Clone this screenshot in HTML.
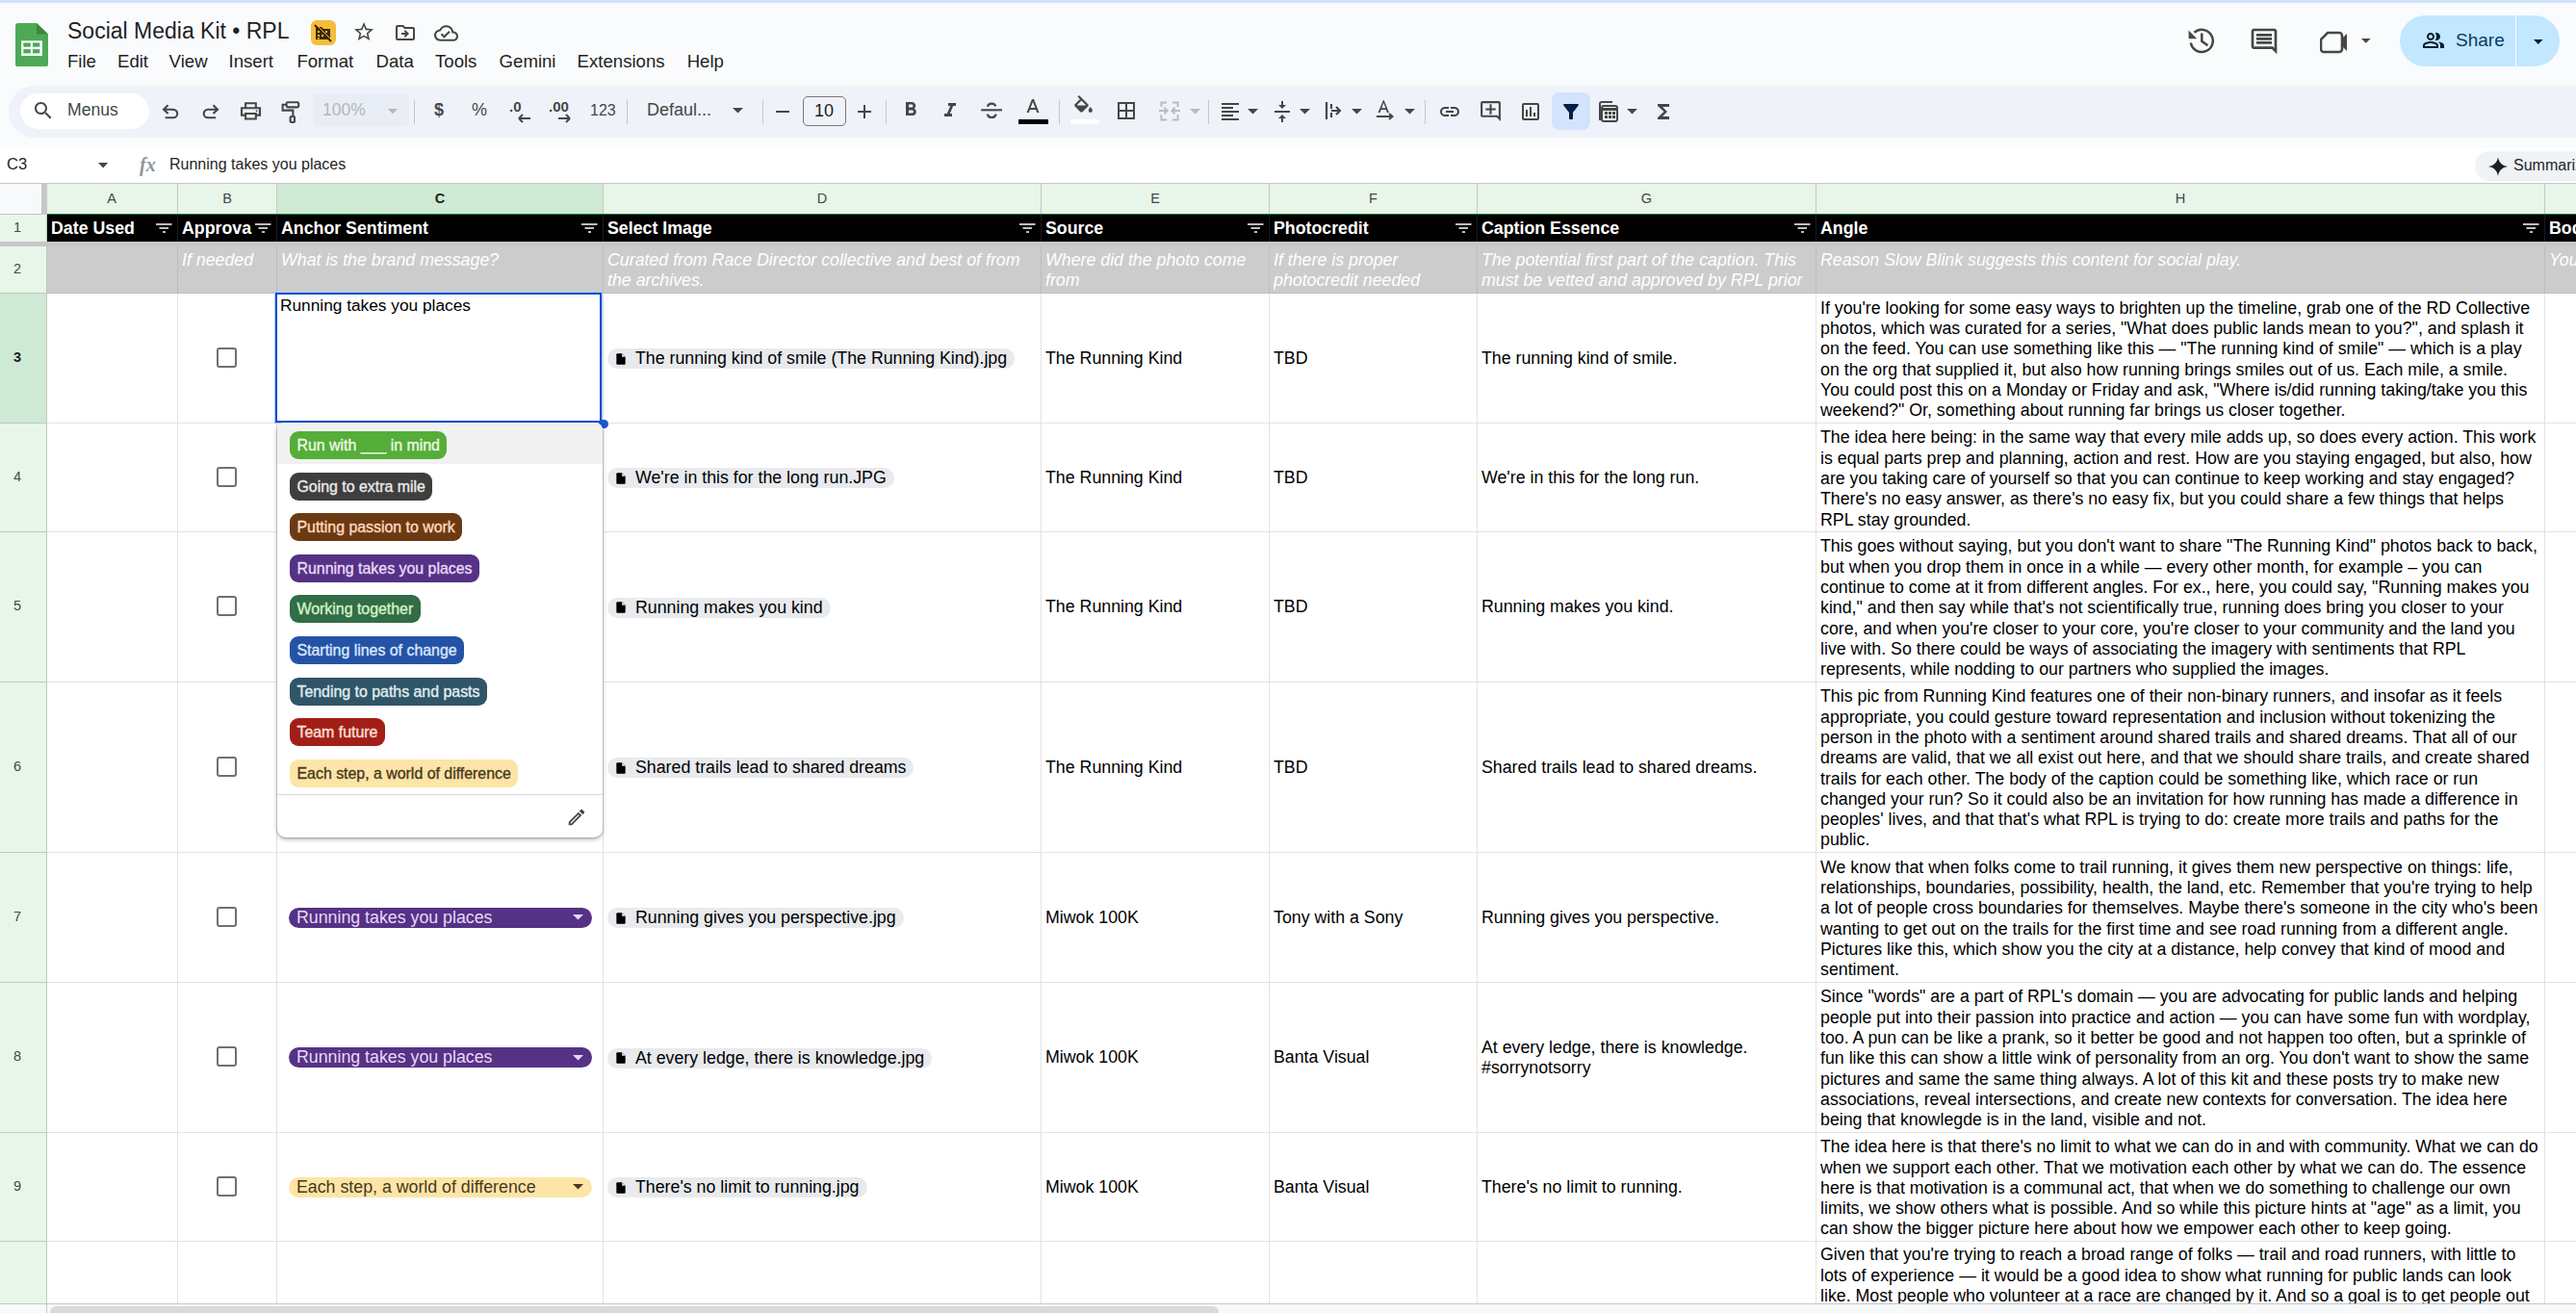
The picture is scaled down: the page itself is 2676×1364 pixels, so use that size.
<!DOCTYPE html><html><head><meta charset="utf-8"><style>
html,body{margin:0;padding:0;}
body{width:2676px;height:1364px;overflow:hidden;position:relative;background:#f9fbfd;font-family:"Liberation Sans", sans-serif;color:#1f1f1f;}
div{box-sizing:border-box;}
svg{display:block}
</style></head><body>
<div style="position:absolute;left:0px;top:0px;width:2676px;height:3px;background:#d3e3fd"></div>
<svg style="position:absolute;left:16px;top:23.6px" width="34" height="45.5" viewBox="0 0 34 45.5">
<path d="M3 0H22L34 11.6V42.5a3 3 0 0 1-3 3H3a3 3 0 0 1-3-3V3a3 3 0 0 1 3-3z" fill="#4caa57"/>
<path d="M22 0L34 11.6H22z" fill="#3a873c"/>
<rect x="6.2" y="18.3" width="21.7" height="15.7" fill="#fff"/>
<rect x="8.3" y="20.4" width="7.5" height="4.3" rx="0.8" fill="#4caa57"/><rect x="18" y="20.4" width="7.3" height="4.3" fill="#4caa57"/>
<rect x="8.3" y="27.1" width="7.5" height="4.3" fill="#4caa57"/><rect x="18" y="27.1" width="7.3" height="4.3" fill="#4caa57"/>
</svg>
<div style="position:absolute;left:70px;top:20.18px;font-size:23px;line-height:25.69px;height:25.69px;white-space:pre;color:#1f1f1f;font-weight:normal;font-style:normal;">Social Media Kit • RPL</div>
<div style="position:absolute;left:323px;top:21px;width:26px;height:26px;background:#f5bd3a;border-radius:6px"></div>
<svg style="position:absolute;left:326px;top:24px" width="20" height="20" viewBox="0 0 20 20">
<path d="M2 4h6l2 2h7v11H2z" fill="#3c2a00"/>
<g fill="#f5bd3a"><rect x="4" y="8" width="2" height="2"/><rect x="8" y="8" width="2" height="2"/><rect x="12" y="8" width="2" height="2"/>
<rect x="4" y="12" width="2" height="2"/><rect x="8" y="12" width="2" height="2"/><rect x="4" y="15" width="2" height="1.5"/></g>
<path d="M1 2L18 19" stroke="#3c2a00" stroke-width="2.2"/><path d="M2.2 1.2L19 18" stroke="#f5bd3a" stroke-width="1"/>
</svg>
<svg style="position:absolute;left:366px;top:21px" width="24" height="24" viewBox="0 0 24 24"><path fill="#444746" d="M22 9.24l-7.19-.62L12 2 9.19 8.63 2 9.24l5.46 4.73L5.82 21 12 17.27 18.18 21l-1.63-7.03L22 9.24zM12 15.4l-3.76 2.270 1-4.28-3.32-2.88 4.38-.38L12 6.1l1.71 4.04 4.38.38-3.32 2.88 1 4.28L12 15.4z"/></svg>
<svg style="position:absolute;left:409px;top:22px" width="24" height="24" viewBox="0 0 24 24"><path fill="#444746" d="M20 6h-8l-2-2H4c-1.1 0-1.99.9-1.99 2L2 18c0 1.1.9 2 2 2h16c1.1 0 2-.9 2-2V8c0-1.1-.9-2-2-2zm0 12H4V6h5.17l2 2H20v10zm-7.84-6H8v2h4.16l-1.59 1.59L11.99 17 16 13.01 11.990 9l-1.41 1.41L12.16 12z"/></svg>
<svg style="position:absolute;left:451px;top:22px" width="25" height="25" viewBox="0 0 24 24"><path fill="#444746" d="M19.35 10.04C18.67 6.59 15.64 4 12 4 9.11 4 6.6 5.64 5.35 8.04 2.34 8.36 0 10.91 0 14c0 3.31 2.69 6 6 6h13c2.76 0 5-2.24 5-5 0-2.64-2.05-4.78-4.65-4.96zM19 18H6c-2.21 0-4-1.79-4-4 0-2.05 1.53-3.76 3.56-3.97l1.07-.11.5-.95C8.08 7.14 9.94 6 12 6c2.62 0 4.88 1.86 5.39 4.43l.3 1.5 1.53.11c1.56.1 2.78 1.41 2.78 2.96 0 1.65-1.35 3-3 3zm-9-3.82l-2.09-2.09L6.5 13.5 10 17l6.01-6.01-1.41-1.41z"/></svg>
<div style="position:absolute;left:70px;top:53.97px;font-size:18.6px;line-height:20.78px;height:20.78px;white-space:pre;color:#1f1f1f;font-weight:normal;font-style:normal;">File</div>
<div style="position:absolute;left:122px;top:53.97px;font-size:18.6px;line-height:20.78px;height:20.78px;white-space:pre;color:#1f1f1f;font-weight:normal;font-style:normal;">Edit</div>
<div style="position:absolute;left:175.6px;top:53.97px;font-size:18.6px;line-height:20.78px;height:20.78px;white-space:pre;color:#1f1f1f;font-weight:normal;font-style:normal;">View</div>
<div style="position:absolute;left:237.5px;top:53.97px;font-size:18.6px;line-height:20.78px;height:20.78px;white-space:pre;color:#1f1f1f;font-weight:normal;font-style:normal;">Insert</div>
<div style="position:absolute;left:308.4px;top:53.97px;font-size:18.6px;line-height:20.78px;height:20.78px;white-space:pre;color:#1f1f1f;font-weight:normal;font-style:normal;">Format</div>
<div style="position:absolute;left:390.5px;top:53.97px;font-size:18.6px;line-height:20.78px;height:20.78px;white-space:pre;color:#1f1f1f;font-weight:normal;font-style:normal;">Data</div>
<div style="position:absolute;left:452px;top:53.97px;font-size:18.6px;line-height:20.78px;height:20.78px;white-space:pre;color:#1f1f1f;font-weight:normal;font-style:normal;">Tools</div>
<div style="position:absolute;left:518.6px;top:53.97px;font-size:18.6px;line-height:20.78px;height:20.78px;white-space:pre;color:#1f1f1f;font-weight:normal;font-style:normal;">Gemini</div>
<div style="position:absolute;left:599.6px;top:53.97px;font-size:18.6px;line-height:20.78px;height:20.78px;white-space:pre;color:#1f1f1f;font-weight:normal;font-style:normal;">Extensions</div>
<div style="position:absolute;left:713.7px;top:53.97px;font-size:18.6px;line-height:20.78px;height:20.78px;white-space:pre;color:#1f1f1f;font-weight:normal;font-style:normal;">Help</div>
<svg style="position:absolute;left:2260px;top:20px" width="50" height="50" viewBox="2260 20 50 50"><g fill="none" stroke="#444746" stroke-width="2.5">
<path d="M2275.8 44.6A11.6 11.6 0 1 0 2279.4 33.8"/><path d="M2287.3 34.6V42.8L2293.4 47.3"/></g>
<path d="M2273.6 31.6V40.2H2282.2Z" fill="#444746"/></svg>
<svg style="position:absolute;left:2336px;top:27px" width="32" height="32" viewBox="0 0 24 24"><path fill="#444746" d="M21.99 4c0-1.1-.89-2-1.99-2H4c-1.1 0-2 .9-2 2v12c0 1.1.9 2 2 2h14l4 4-.01-18zM20 4v13.17L18.83 16H4V4h16zM6 12h12v2H6zm0-3h12v2H6zm0-3h12v2H6z"/></svg>
<svg style="position:absolute;left:2410px;top:32px" width="30" height="24" viewBox="0 0 30 24">
<path d="M8 2H20a3 3 0 0 1 3 3V19a3 3 0 0 1-3 3H4a3 3 0 0 1-3-3V9z" fill="none" stroke="#444746" stroke-width="2.6"/>
<path d="M23 8L28 3V21L23 16z" fill="#444746"/></svg>
<svg style="position:absolute;left:2452.20px;top:39.00px" width="11.60" height="6.80" viewBox="-1 -1 11.60 6.80"><path d="M0 0H9.6L4.8 4.8Z" fill="#444746"/></svg>
<div style="position:absolute;left:2493px;top:16px;width:166px;height:53px;background:#c2e7ff;border-radius:27px"></div>
<div style="position:absolute;left:2613px;top:16px;width:1.3px;height:53px;background:#f9fbfd"></div>
<svg style="position:absolute;left:2515px;top:30px" width="26" height="24" viewBox="0 0 24 24"><path fill="#001d35" d="M16.67 13.13C18.04 14.06 19 15.32 19 17v3h4v-3c0-2.18-3.57-3.47-6.33-3.87zM15 12c2.21 0 4-1.79 4-4s-1.79-4-4-4c-.47 0-.91.1-1.33.24C14.5 5.27 15 6.58 15 8s-.5 2.73-1.33 3.76c.42.14.86.24 1.33.24zm-6 0c2.21 0 4-1.79 4-4s-1.79-4-4-4-4 1.79-4 4 1.79 4 4 4zm0-6c1.1 0 2 .9 2 2s-.9 2-2 2-2-.9-2-2 .9-2 2-2zm0 7c-2.67 0-8 1.34-8 4v3h16v-3c0-2.66-5.33-4-8-4zm6 5H3v-.99C3.2 16.29 6.3 15 9 15s5.8 1.29 6 2v1z"/></svg>
<div style="position:absolute;left:2551px;top:31.30px;font-size:19px;line-height:21.22px;height:21.22px;white-space:pre;color:#0b3a64;font-weight:normal;font-style:normal;font-weight:500">Share</div>
<svg style="position:absolute;left:2631.00px;top:39.80px" width="11.60" height="7.00" viewBox="-1 -1 11.60 7.00"><path d="M0 0H9.6L4.8 5Z" fill="#001d35"/></svg>
<div style="position:absolute;left:9px;top:89px;width:2800px;height:54px;background:#eff3f9;border-radius:27px"></div>
<div style="position:absolute;left:21px;top:97px;width:134px;height:37px;background:#fff;border-radius:19px"></div>
<svg style="position:absolute;left:33px;top:103px" width="24" height="24" viewBox="0 0 24 24"><path fill="#444746" d="M15.5 14h-.79l-.28-.27C15.41 12.59 16 11.11 16 9.5 16 5.91 13.09 3 9.5 3S3 5.91 3 9.5 5.91 16 9.5 16c1.61 0 3.090-.59 4.23-1.57l.27.28v.79l5 4.99L20.49 19l-4.99-5zm-6 0C7.01 14 5 11.99 5 9.5S7.01 5 9.5 5 14 7.01 14 9.5 11.99 14 9.5 14z"/></svg>
<div style="position:absolute;left:70px;top:104.67px;font-size:17.6px;line-height:19.66px;height:19.66px;white-space:pre;color:#444746;font-weight:normal;font-style:normal;">Menus</div>
<svg style="position:absolute;left:0;top:0" width="340" height="140" viewBox="0 0 340 140"><g fill="none" stroke="#444746" stroke-width="2.1" stroke-linejoin="miter">
<path d="M174.6 109.3L170 113.7L174.6 118.1M170 113.7H179.9A4.3 4.3 0 0 1 179.9 122.3H171.6"/>
<path d="M221.5 109.3L226.1 113.7L221.5 118.1M226.1 113.7H216A4.3 4.3 0 0 0 216 122.3H224.2"/>
<path d="M255.1 111.8V107.2H265.8V111.8M255.1 119.6H251V112.2H270V119.6H265.8M255.1 118H265.8V123.5H255.1Z"/>
<rect x="297.6" y="106.2" width="12.6" height="5.2" rx="1.3"/>
<path d="M297.6 108.8H293.6V114.6H304.4V121"/><rect x="301.6" y="121" width="4.4" height="6" rx="1"/>
</g><circle cx="266.6" cy="115.2" r="0.9" fill="#444746"/></svg>
<div style="position:absolute;left:325px;top:97px;width:100px;height:35px;background:#e9eef6;border-radius:4px"></div>
<div style="position:absolute;left:335px;top:104.66px;font-size:17.5px;line-height:19.55px;height:19.55px;white-space:pre;color:#b4b7ba;font-weight:normal;font-style:normal;">100%</div>
<svg style="position:absolute;left:401.50px;top:111.80px" width="12.00" height="7.20" viewBox="-1 -1 12.00 7.20"><path d="M0 0H10L5.0 5.2Z" fill="#b4b7ba"/></svg>
<div style="position:absolute;left:430px;top:104px;width:1px;height:25px;background:#c7c7c7"></div>
<div style="position:absolute;left:451px;top:104.21px;font-size:18px;line-height:20.11px;height:20.11px;white-space:pre;color:#444746;font-weight:normal;font-style:normal;font-weight:600">$</div>
<div style="position:absolute;left:490px;top:104.21px;font-size:18px;line-height:20.11px;height:20.11px;white-space:pre;color:#444746;font-weight:normal;font-style:normal;">%</div>
<div style="position:absolute;left:529px;top:103.42px;font-size:15px;line-height:16.75px;height:16.75px;white-space:pre;color:#444746;font-weight:bold;font-style:normal;">.0</div>
<svg style="position:absolute;left:538px;top:118px" width="14" height="10" viewBox="0 0 14 10"><path d="M1 5H13M1 5L5 1M1 5L5 9" stroke="#444746" stroke-width="2" fill="none"/></svg>
<div style="position:absolute;left:570px;top:103.42px;font-size:15px;line-height:16.75px;height:16.75px;white-space:pre;color:#444746;font-weight:bold;font-style:normal;">.00</div>
<svg style="position:absolute;left:579px;top:118px" width="14" height="10" viewBox="0 0 14 10"><path d="M1 5H13M13 5L9 1M13 5L9 9" stroke="#444746" stroke-width="2" fill="none"/></svg>
<div style="position:absolute;left:613px;top:105.52px;font-size:16px;line-height:17.87px;height:17.87px;white-space:pre;color:#444746;font-weight:normal;font-style:normal;">123</div>
<div style="position:absolute;left:651px;top:104px;width:1px;height:25px;background:#c7c7c7"></div>
<div style="position:absolute;left:672px;top:104.21px;font-size:18px;line-height:20.11px;height:20.11px;white-space:pre;color:#444746;font-weight:normal;font-style:normal;">Defaul...</div>
<svg style="position:absolute;left:759.50px;top:110.70px" width="13.00" height="7.60" viewBox="-1 -1 13.00 7.60"><path d="M0 0H11L5.5 5.6Z" fill="#444746"/></svg>
<div style="position:absolute;left:792px;top:104px;width:1px;height:25px;background:#c7c7c7"></div>
<div style="position:absolute;left:806px;top:115px;width:14px;height:2px;background:#444746"></div>
<div style="position:absolute;left:834px;top:100px;width:45px;height:31px;border:1.3px solid #747775;border-radius:5px"></div>
<div style="position:absolute;left:846px;top:104.71px;font-size:18px;line-height:20.11px;height:20.11px;white-space:pre;color:#1f1f1f;font-weight:normal;font-style:normal;">10</div>
<div style="position:absolute;left:891px;top:115px;width:14px;height:2px;background:#444746"></div>
<div style="position:absolute;left:897px;top:109px;width:2px;height:14px;background:#444746"></div>
<div style="position:absolute;left:920px;top:104px;width:1px;height:25px;background:#c7c7c7"></div>
<svg style="position:absolute;left:934px;top:102px" width="24" height="24" viewBox="0 0 24 24"><path fill="#444746" d="M15.6 10.79c.97-.67 1.65-1.77 1.65-2.79 0-2.26-1.75-4-4-4H7v14h7.04c2.09 0 3.71-1.7 3.71-3.79 0-1.52-.86-2.82-2.15-3.42zM10 6.5h3c.83 0 1.5.67 1.5 1.5s-.67 1.5-1.5 1.5h-3v-3zm3.5 9H10v-3h3.5c.83 0 1.5.67 1.5 1.5s-.67 1.5-1.5 1.5z"/></svg>
<svg style="position:absolute;left:975px;top:103px" width="24" height="24" viewBox="0 0 24 24"><path fill="#444746" d="M10 4v3h2.21l-3.42 8H6v3h8v-3h-2.21l3.42-8H18V4z"/></svg>
<svg style="position:absolute;left:1010px;top:95px" width="40" height="40" viewBox="1010 95 40 40"><g fill="none" stroke="#444746" stroke-width="2.1">
<path d="M1019.2 114.3H1041"/><path d="M1025.8 110.8A4.6 4.6 0 0 1 1034.4 110.4"/><path d="M1025.6 118.6A4.8 4.8 0 0 0 1034.8 118.6"/></g></svg>
<svg style="position:absolute;left:1061px;top:100px" width="24" height="24" viewBox="0 0 24 24"><path fill="#444746" d="M11 3L5.5 17h2.25l1.12-3h6.25l1.12 3h2.25L13 3h-2zm-1.38 9L12 5.67 14.38 12H9.62z"/></svg>
<div style="position:absolute;left:1058px;top:124px;width:31px;height:5px;background:#000"></div>
<div style="position:absolute;left:1100px;top:104px;width:1px;height:25px;background:#c7c7c7"></div>
<svg style="position:absolute;left:1113px;top:99px" width="25" height="25" viewBox="0 0 24 24"><path fill="#444746" d="M16.56 8.94L7.62 0 6.21 1.41l2.38 2.38-5.15 5.15c-.59.59-.59 1.54 0 2.12l5.5 5.5c.29.29.68.44 1.06.44s.77-.15 1.06-.44l5.5-5.5c.59-.58.59-1.53 0-2.12zM5.21 10L10 5.21 14.79 10H5.21zM19 11.5s-2 2.17-2 3.5c0 1.1.9 2 2 2s2-.9 2-2c0-1.33-2-3.5-2-3.5z"/></svg>
<div style="position:absolute;left:1112px;top:124px;width:30px;height:5px;background:#fff"></div>
<svg style="position:absolute;left:1158px;top:103px" width="24" height="24" viewBox="0 0 24 24"><path fill="#444746" d="M3 3v18h18V3H3zm8 16H5v-6h6v6zm0-8H5V5h6v6zm8 8h-6v-6h6v6zm0-8h-6V5h6v6z"/></svg>
<svg style="position:absolute;left:1195px;top:100px" width="40" height="30" viewBox="1195 100 40 30"><g stroke="#b8bcc0" stroke-width="2" fill="none">
<path d="M1212.1 106.5H1206.4V111M1206.4 119.3V124.5H1212.1M1217.9 106.5H1223.6V111M1223.6 119.3V124.5H1217.9"/><path d="M1204 115H1212.6M1209.4 111.8L1212.6 115L1209.4 118.2M1226 115H1217.4M1220.6 111.8L1217.4 115L1220.6 118.2"/></g></svg>
<svg style="position:absolute;left:1235.20px;top:112.10px" width="13.00" height="7.60" viewBox="-1 -1 13.00 7.60"><path d="M0 0H11L5.5 5.6Z" fill="#b8bcc0"/></svg>
<div style="position:absolute;left:1255px;top:104px;width:1px;height:25px;background:#c7c7c7"></div>
<svg style="position:absolute;left:1266px;top:104px" width="24" height="24" viewBox="0 0 24 24"><path fill="#444746" d="M15 15H3v2h12v-2zm0-8H3v2h12V7zM3 13h18v-2H3v2zm0 8h18v-2H3v2zM3 3v2h18V3H3z"/></svg>
<svg style="position:absolute;left:1295.30px;top:112.10px" width="13.00" height="7.60" viewBox="-1 -1 13.00 7.60"><path d="M0 0H11L5.5 5.6Z" fill="#444746"/></svg>
<svg style="position:absolute;left:1320px;top:104px" width="24" height="24" viewBox="0 0 24 24"><path fill="#444746" d="M8 19h3v4h2v-4h3l-4-4-4 4zm8-14h-3V1h-2v4H8l4 4 4-4zM4 11v2h16v-2H4z"/></svg>
<svg style="position:absolute;left:1349.00px;top:112.10px" width="13.00" height="7.60" viewBox="-1 -1 13.00 7.60"><path d="M0 0H11L5.5 5.6Z" fill="#444746"/></svg>
<svg style="position:absolute;left:1376px;top:104px" width="20" height="22" viewBox="0 0 20 22"><g stroke="#444746" stroke-width="2.2" fill="none">
<path d="M2 2V20M7 4V9M7 13V18M7 11H16M12 7L16 11L12 15"/></g></svg>
<svg style="position:absolute;left:1403.00px;top:112.10px" width="13.00" height="7.60" viewBox="-1 -1 13.00 7.60"><path d="M0 0H11L5.5 5.6Z" fill="#444746"/></svg>
<svg style="position:absolute;left:1429px;top:103px" width="22" height="24" viewBox="0 0 22 24"><path d="M8 1L2.5 14h2.1l1.1-3h5.1l1.1 3h2.1L8.6 1zM6.3 9.2L8.3 3.8l2 5.4z" fill="#444746"/>
<path d="M1 18H17M14 15L17.5 18L14 21" stroke="#444746" stroke-width="2" fill="none"/></svg>
<svg style="position:absolute;left:1457.70px;top:112.10px" width="13.00" height="7.60" viewBox="-1 -1 13.00 7.60"><path d="M0 0H11L5.5 5.6Z" fill="#444746"/></svg>
<div style="position:absolute;left:1480px;top:104px;width:1px;height:25px;background:#c7c7c7"></div>
<svg style="position:absolute;left:1494px;top:104px" width="24" height="24" viewBox="0 0 24 24"><path fill="#444746" d="M3.9 12c0-1.71 1.39-3.1 3.1-3.1h4V7H7c-2.76 0-5 2.24-5 5s2.24 5 5 5h4v-1.9H7c-1.71 0-3.1-1.39-3.1-3.1zM8 13h8v-2H8v2zm9-6h-4v1.9h4c1.71 0 3.1 1.39 3.1 3.1s-1.39 3.1-3.1 3.1h-4V17h4c2.76 0 5-2.24 5-5s-2.24-5-5-5z"/></svg>
<svg style="position:absolute;left:1536px;top:103px" width="25" height="25" viewBox="0 0 24 24"><path fill="#444746" d="M22 4c0-1.1-.9-2-2-2H4c-1.1 0-2 .9-2 2v12c0 1.1.9 2 2 2h14l4 4V4zm-2 13.17L18.83 16H4V4h16v13.17zM13 5h-2v4H7v2h4v4h2v-4h4V9h-4z"/></svg>
<svg style="position:absolute;left:1578px;top:104px" width="24" height="24" viewBox="0 0 24 24"><path fill="#444746" d="M9 17H7v-7h2v7zm4 0h-2V7h2v10zm4 0h-2v-4h2v4zm2 2H5V5h14v14zm0-16H5c-1.1 0-2 .9-2 2v14c0 1.1.9 2 2 2h14c1.1 0 2-.9 2-2V5c0-1.1-.9-2-2-2z"/></svg>
<div style="position:absolute;left:1612px;top:96px;width:40px;height:38.5px;background:#d3e3fd;border-radius:8px"></div>
<svg style="position:absolute;left:1620px;top:104px" width="24" height="24" viewBox="0 0 24 24"><path fill="#041e49" d="M4.25 5.61C6.27 8.2 10 13 10 13v6c0 .55.45 1 1 1h2c.55 0 1-.45 1-1v-6s3.72-4.8 5.74-7.39c.51-.66.04-1.61-.79-1.61H5.04c-.83 0-1.3.95-.79 1.61z"/></svg>
<svg style="position:absolute;left:1658px;top:104px" width="25" height="24" viewBox="0 0 25 24"><g fill="none" stroke="#444746" stroke-width="2">
<path d="M4 21V4a2 2 0 0 1 2-2H17"/><rect x="6" y="6" width="16" height="16" rx="2"/></g>
<g fill="#444746"><rect x="9" y="12" width="3" height="3"/><rect x="13" y="12" width="3" height="3"/><rect x="17" y="12" width="3" height="3"/>
<rect x="9" y="16" width="3" height="3"/><rect x="13" y="16" width="3" height="3"/><rect x="17" y="16" width="3" height="3"/><rect x="7" y="8" width="14" height="3"/></g></svg>
<svg style="position:absolute;left:1688.70px;top:112.10px" width="13.00" height="7.60" viewBox="-1 -1 13.00 7.60"><path d="M0 0H11L5.5 5.6Z" fill="#444746"/></svg>
<svg style="position:absolute;left:1716px;top:104px" width="24" height="24" viewBox="0 0 24 24"><path fill="#444746" d="M18 4H6v2l6.5 6L6 18v2h12v-3h-7l5-5-5-5h7z"/></svg>
<div style="position:absolute;left:0px;top:153px;width:2676px;height:38px;background:#fff"></div>
<div style="position:absolute;left:7px;top:162.18px;font-size:16.6px;line-height:18.54px;height:18.54px;white-space:pre;color:#1f1f1f;font-weight:normal;font-style:normal;">C3</div>
<svg style="position:absolute;left:101.40px;top:168.30px" width="12.20" height="7.60" viewBox="-1 -1 12.20 7.60"><path d="M0 0H10.2L5.1 5.6Z" fill="#444746"/></svg>
<div style="position:absolute;left:145px;top:159.90px;font-size:20px;line-height:22.34px;height:22.34px;white-space:pre;color:#8f959b;font-weight:normal;font-style:normal;font-family:'Liberation Serif',serif;font-style:italic;font-weight:bold">fx</div>
<div style="position:absolute;left:176px;top:161.82px;font-size:16px;line-height:17.87px;height:17.87px;white-space:pre;color:#1f1f1f;font-weight:normal;font-style:normal;">Running takes you places</div>
<div style="position:absolute;left:2571px;top:157px;width:120px;height:31px;background:#eff2f7;border-radius:16px"></div>
<svg style="position:absolute;left:2585px;top:163px" width="20" height="20" viewBox="0 0 20 20"><path d="M10 0C10.6 5.5 14.5 9.4 20 10 14.5 10.6 10.6 14.5 10 20 9.4 14.5 5.5 10.6 0 10 5.5 9.4 9.4 5.5 10 0z" fill="#1f1f1f"/></svg>
<div style="position:absolute;left:2611px;top:163.22px;font-size:16px;line-height:17.87px;height:17.87px;white-space:pre;color:#1f1f1f;font-weight:normal;font-style:normal;">Summarize</div>
<div style="position:absolute;left:0px;top:190px;width:2676px;height:1px;background:#c7c7c7"></div>
<div style="position:absolute;left:0px;top:191px;width:43px;height:31px;background:#f8f9fa"></div>
<div style="position:absolute;left:43px;top:191px;width:5px;height:31px;background:#c7c7c7"></div>
<div style="position:absolute;left:48px;top:191px;width:136px;height:31px;background:#e8f5e9"></div>
<div style="position:absolute;left:48px;top:191px;width:136px;height:31px;line-height:31px;text-align:center;font-size:14.5px;color:#444746;font-weight:normal">A</div>
<div style="position:absolute;left:185px;top:191px;width:102px;height:31px;background:#e8f5e9"></div>
<div style="position:absolute;left:184px;top:191px;width:1px;height:31px;background:#c4c7c5"></div>
<div style="position:absolute;left:185px;top:191px;width:102px;height:31px;line-height:31px;text-align:center;font-size:14.5px;color:#444746;font-weight:normal">B</div>
<div style="position:absolute;left:288px;top:191px;width:338px;height:31px;background:#cee9d4"></div>
<div style="position:absolute;left:287px;top:191px;width:1px;height:31px;background:#c4c7c5"></div>
<div style="position:absolute;left:288px;top:191px;width:338px;height:31px;line-height:31px;text-align:center;font-size:14.5px;color:#1f1f1f;font-weight:bold">C</div>
<div style="position:absolute;left:627px;top:191px;width:454px;height:31px;background:#e8f5e9"></div>
<div style="position:absolute;left:626px;top:191px;width:1px;height:31px;background:#c4c7c5"></div>
<div style="position:absolute;left:627px;top:191px;width:454px;height:31px;line-height:31px;text-align:center;font-size:14.5px;color:#444746;font-weight:normal">D</div>
<div style="position:absolute;left:1082px;top:191px;width:236px;height:31px;background:#e8f5e9"></div>
<div style="position:absolute;left:1081px;top:191px;width:1px;height:31px;background:#c4c7c5"></div>
<div style="position:absolute;left:1082px;top:191px;width:236px;height:31px;line-height:31px;text-align:center;font-size:14.5px;color:#444746;font-weight:normal">E</div>
<div style="position:absolute;left:1319px;top:191px;width:215px;height:31px;background:#e8f5e9"></div>
<div style="position:absolute;left:1318px;top:191px;width:1px;height:31px;background:#c4c7c5"></div>
<div style="position:absolute;left:1319px;top:191px;width:215px;height:31px;line-height:31px;text-align:center;font-size:14.5px;color:#444746;font-weight:normal">F</div>
<div style="position:absolute;left:1535px;top:191px;width:351px;height:31px;background:#e8f5e9"></div>
<div style="position:absolute;left:1534px;top:191px;width:1px;height:31px;background:#c4c7c5"></div>
<div style="position:absolute;left:1535px;top:191px;width:351px;height:31px;line-height:31px;text-align:center;font-size:14.5px;color:#444746;font-weight:normal">G</div>
<div style="position:absolute;left:1887px;top:191px;width:756px;height:31px;background:#e8f5e9"></div>
<div style="position:absolute;left:1886px;top:191px;width:1px;height:31px;background:#c4c7c5"></div>
<div style="position:absolute;left:1887px;top:191px;width:756px;height:31px;line-height:31px;text-align:center;font-size:14.5px;color:#444746;font-weight:normal">H</div>
<div style="position:absolute;left:2644px;top:191px;width:156px;height:31px;background:#e8f5e9"></div>
<div style="position:absolute;left:2643px;top:191px;width:1px;height:31px;background:#c4c7c5"></div>
<div style="position:absolute;left:2644px;top:191px;width:156px;height:31px;line-height:31px;text-align:center;font-size:14.5px;color:#444746;font-weight:normal">I</div>
<div style="position:absolute;left:48px;top:222px;width:2676px;height:1px;background:#188038"></div>
<div style="position:absolute;left:0px;top:223px;width:48px;height:28px;background:#e8f5e9"></div>
<div style="position:absolute;left:0px;top:251px;width:48px;height:1px;background:#c4c7c5"></div>
<div style="position:absolute;left:0px;top:221.5px;width:36px;height:28px;display:flex;align-items:center;justify-content:center;font-size:14.5px;color:#444746;font-weight:normal">1</div>
<div style="position:absolute;left:0px;top:256px;width:48px;height:48px;background:#e8f5e9"></div>
<div style="position:absolute;left:0px;top:304px;width:48px;height:1px;background:#c4c7c5"></div>
<div style="position:absolute;left:0px;top:254.5px;width:36px;height:48px;display:flex;align-items:center;justify-content:center;font-size:14.5px;color:#444746;font-weight:normal">2</div>
<div style="position:absolute;left:0px;top:305px;width:48px;height:134px;background:#cee9d4"></div>
<div style="position:absolute;left:0px;top:439px;width:48px;height:1px;background:#c4c7c5"></div>
<div style="position:absolute;left:0px;top:303.5px;width:36px;height:134px;display:flex;align-items:center;justify-content:center;font-size:14.5px;color:#1f1f1f;font-weight:bold">3</div>
<div style="position:absolute;left:0px;top:440px;width:48px;height:112px;background:#e8f5e9"></div>
<div style="position:absolute;left:0px;top:552px;width:48px;height:1px;background:#c4c7c5"></div>
<div style="position:absolute;left:0px;top:438.5px;width:36px;height:112px;display:flex;align-items:center;justify-content:center;font-size:14.5px;color:#444746;font-weight:normal">4</div>
<div style="position:absolute;left:0px;top:553px;width:48px;height:155px;background:#e8f5e9"></div>
<div style="position:absolute;left:0px;top:708px;width:48px;height:1px;background:#c4c7c5"></div>
<div style="position:absolute;left:0px;top:551.5px;width:36px;height:155px;display:flex;align-items:center;justify-content:center;font-size:14.5px;color:#444746;font-weight:normal">5</div>
<div style="position:absolute;left:0px;top:709px;width:48px;height:176px;background:#e8f5e9"></div>
<div style="position:absolute;left:0px;top:885px;width:48px;height:1px;background:#c4c7c5"></div>
<div style="position:absolute;left:0px;top:707.5px;width:36px;height:176px;display:flex;align-items:center;justify-content:center;font-size:14.5px;color:#444746;font-weight:normal">6</div>
<div style="position:absolute;left:0px;top:886px;width:48px;height:134px;background:#e8f5e9"></div>
<div style="position:absolute;left:0px;top:1020px;width:48px;height:1px;background:#c4c7c5"></div>
<div style="position:absolute;left:0px;top:884.5px;width:36px;height:134px;display:flex;align-items:center;justify-content:center;font-size:14.5px;color:#444746;font-weight:normal">7</div>
<div style="position:absolute;left:0px;top:1021px;width:48px;height:155px;background:#e8f5e9"></div>
<div style="position:absolute;left:0px;top:1176px;width:48px;height:1px;background:#c4c7c5"></div>
<div style="position:absolute;left:0px;top:1019.5px;width:36px;height:155px;display:flex;align-items:center;justify-content:center;font-size:14.5px;color:#444746;font-weight:normal">8</div>
<div style="position:absolute;left:0px;top:1177px;width:48px;height:112px;background:#e8f5e9"></div>
<div style="position:absolute;left:0px;top:1289px;width:48px;height:1px;background:#c4c7c5"></div>
<div style="position:absolute;left:0px;top:1175.5px;width:36px;height:112px;display:flex;align-items:center;justify-content:center;font-size:14.5px;color:#444746;font-weight:normal">9</div>
<div style="position:absolute;left:0px;top:1290px;width:48px;height:64px;background:#e8f5e9"></div>
<div style="position:absolute;left:0px;top:1354px;width:48px;height:1px;background:#c4c7c5"></div>
<div style="position:absolute;left:48px;top:191px;width:1px;height:1163px;background:#c4c7c5"></div>
<div style="position:absolute;left:0px;top:222px;width:48px;height:1px;background:#c4c7c5"></div>
<div style="position:absolute;left:49px;top:223px;width:2676px;height:28px;background:#000"></div>
<div style="position:absolute;left:53px;top:223px;width:106px;height:28px;line-height:28px;font-size:17.77px;font-weight:bold;color:#fff;white-space:pre;overflow:hidden">Date Used</div>
<svg style="position:absolute;left:162px;top:231px" width="17" height="12" viewBox="0 0 17 12"><g fill="#bdbdbd"><rect x="0" y="1" width="16.5" height="2"/><rect x="3.5" y="5" width="9.5" height="2"/><rect x="7" y="9" width="3" height="2"/></g></svg>
<div style="position:absolute;left:184px;top:223px;width:1px;height:28px;background:#1b1b1b"></div>
<div style="position:absolute;left:189px;top:223px;width:73px;height:28px;line-height:28px;font-size:17.77px;font-weight:bold;color:#fff;white-space:pre;overflow:hidden">Approva</div>
<svg style="position:absolute;left:265px;top:231px" width="17" height="12" viewBox="0 0 17 12"><g fill="#bdbdbd"><rect x="0" y="1" width="16.5" height="2"/><rect x="3.5" y="5" width="9.5" height="2"/><rect x="7" y="9" width="3" height="2"/></g></svg>
<div style="position:absolute;left:287px;top:223px;width:1px;height:28px;background:#1b1b1b"></div>
<div style="position:absolute;left:292px;top:223px;width:309px;height:28px;line-height:28px;font-size:17.77px;font-weight:bold;color:#fff;white-space:pre;overflow:hidden">Anchor Sentiment</div>
<svg style="position:absolute;left:604px;top:231px" width="17" height="12" viewBox="0 0 17 12"><g fill="#bdbdbd"><rect x="0" y="1" width="16.5" height="2"/><rect x="3.5" y="5" width="9.5" height="2"/><rect x="7" y="9" width="3" height="2"/></g></svg>
<div style="position:absolute;left:626px;top:223px;width:1px;height:28px;background:#1b1b1b"></div>
<div style="position:absolute;left:631px;top:223px;width:425px;height:28px;line-height:28px;font-size:17.77px;font-weight:bold;color:#fff;white-space:pre;overflow:hidden">Select Image</div>
<svg style="position:absolute;left:1059px;top:231px" width="17" height="12" viewBox="0 0 17 12"><g fill="#bdbdbd"><rect x="0" y="1" width="16.5" height="2"/><rect x="3.5" y="5" width="9.5" height="2"/><rect x="7" y="9" width="3" height="2"/></g></svg>
<div style="position:absolute;left:1081px;top:223px;width:1px;height:28px;background:#1b1b1b"></div>
<div style="position:absolute;left:1086px;top:223px;width:207px;height:28px;line-height:28px;font-size:17.77px;font-weight:bold;color:#fff;white-space:pre;overflow:hidden">Source</div>
<svg style="position:absolute;left:1296px;top:231px" width="17" height="12" viewBox="0 0 17 12"><g fill="#bdbdbd"><rect x="0" y="1" width="16.5" height="2"/><rect x="3.5" y="5" width="9.5" height="2"/><rect x="7" y="9" width="3" height="2"/></g></svg>
<div style="position:absolute;left:1318px;top:223px;width:1px;height:28px;background:#1b1b1b"></div>
<div style="position:absolute;left:1323px;top:223px;width:186px;height:28px;line-height:28px;font-size:17.77px;font-weight:bold;color:#fff;white-space:pre;overflow:hidden">Photocredit</div>
<svg style="position:absolute;left:1512px;top:231px" width="17" height="12" viewBox="0 0 17 12"><g fill="#bdbdbd"><rect x="0" y="1" width="16.5" height="2"/><rect x="3.5" y="5" width="9.5" height="2"/><rect x="7" y="9" width="3" height="2"/></g></svg>
<div style="position:absolute;left:1534px;top:223px;width:1px;height:28px;background:#1b1b1b"></div>
<div style="position:absolute;left:1539px;top:223px;width:322px;height:28px;line-height:28px;font-size:17.77px;font-weight:bold;color:#fff;white-space:pre;overflow:hidden">Caption Essence</div>
<svg style="position:absolute;left:1864px;top:231px" width="17" height="12" viewBox="0 0 17 12"><g fill="#bdbdbd"><rect x="0" y="1" width="16.5" height="2"/><rect x="3.5" y="5" width="9.5" height="2"/><rect x="7" y="9" width="3" height="2"/></g></svg>
<div style="position:absolute;left:1886px;top:223px;width:1px;height:28px;background:#1b1b1b"></div>
<div style="position:absolute;left:1891px;top:223px;width:727px;height:28px;line-height:28px;font-size:17.77px;font-weight:bold;color:#fff;white-space:pre;overflow:hidden">Angle</div>
<svg style="position:absolute;left:2621px;top:231px" width="17" height="12" viewBox="0 0 17 12"><g fill="#bdbdbd"><rect x="0" y="1" width="16.5" height="2"/><rect x="3.5" y="5" width="9.5" height="2"/><rect x="7" y="9" width="3" height="2"/></g></svg>
<div style="position:absolute;left:2643px;top:223px;width:1px;height:28px;background:#1b1b1b"></div>
<div style="position:absolute;left:2648px;top:223px;width:127px;height:28px;line-height:28px;font-size:17.77px;font-weight:bold;color:#fff;white-space:pre;overflow:hidden">Body</div>
<div style="position:absolute;left:0px;top:251px;width:2676px;height:5px;background:#c7c7c7"></div>
<div style="position:absolute;left:49px;top:256px;width:2676px;height:48px;background:#cccccc"></div>
<div style="position:absolute;left:53px;top:259.7px;width:131px;height:46px;line-height:21.33px;font-size:17.77px;font-style:italic;color:#ffffff;white-space:pre;overflow:hidden"></div>
<div style="position:absolute;left:184px;top:256px;width:1px;height:48px;background:#bdbdbd"></div>
<div style="position:absolute;left:189px;top:259.7px;width:98px;height:46px;line-height:21.33px;font-size:17.77px;font-style:italic;color:#ffffff;white-space:pre;overflow:hidden">If needed</div>
<div style="position:absolute;left:287px;top:256px;width:1px;height:48px;background:#bdbdbd"></div>
<div style="position:absolute;left:292px;top:259.7px;width:334px;height:46px;line-height:21.33px;font-size:17.77px;font-style:italic;color:#ffffff;white-space:pre;overflow:hidden">What is the brand message?</div>
<div style="position:absolute;left:626px;top:256px;width:1px;height:48px;background:#bdbdbd"></div>
<div style="position:absolute;left:631px;top:259.7px;width:450px;height:46px;line-height:21.33px;font-size:17.77px;font-style:italic;color:#ffffff;white-space:pre;overflow:hidden">Curated from Race Director collective and best of from<br>the archives.</div>
<div style="position:absolute;left:1081px;top:256px;width:1px;height:48px;background:#bdbdbd"></div>
<div style="position:absolute;left:1086px;top:259.7px;width:232px;height:46px;line-height:21.33px;font-size:17.77px;font-style:italic;color:#ffffff;white-space:pre;overflow:hidden">Where did the photo come<br>from</div>
<div style="position:absolute;left:1318px;top:256px;width:1px;height:48px;background:#bdbdbd"></div>
<div style="position:absolute;left:1323px;top:259.7px;width:211px;height:46px;line-height:21.33px;font-size:17.77px;font-style:italic;color:#ffffff;white-space:pre;overflow:hidden">If there is proper<br>photocredit needed</div>
<div style="position:absolute;left:1534px;top:256px;width:1px;height:48px;background:#bdbdbd"></div>
<div style="position:absolute;left:1539px;top:259.7px;width:347px;height:46px;line-height:21.33px;font-size:17.77px;font-style:italic;color:#ffffff;white-space:pre;overflow:hidden">The potential first part of the caption. This<br>must be vetted and approved by RPL prior</div>
<div style="position:absolute;left:1886px;top:256px;width:1px;height:48px;background:#bdbdbd"></div>
<div style="position:absolute;left:1891px;top:259.7px;width:752px;height:46px;line-height:21.33px;font-size:17.77px;font-style:italic;color:#ffffff;white-space:pre;overflow:hidden">Reason Slow Blink suggests this content for social play.</div>
<div style="position:absolute;left:2643px;top:256px;width:1px;height:48px;background:#bdbdbd"></div>
<div style="position:absolute;left:2648px;top:259.7px;width:152px;height:46px;line-height:21.33px;font-size:17.77px;font-style:italic;color:#ffffff;white-space:pre;overflow:hidden">You</div>
<div style="position:absolute;left:49px;top:304px;width:2676px;height:1px;background:#bdbdbd"></div>
<div style="position:absolute;left:49px;top:305px;width:2676px;height:1049px;background:#fff"></div>
<div style="position:absolute;left:49px;top:439px;width:2676px;height:1px;background:#e2e2e2"></div>
<div style="position:absolute;left:49px;top:552px;width:2676px;height:1px;background:#e2e2e2"></div>
<div style="position:absolute;left:49px;top:708px;width:2676px;height:1px;background:#e2e2e2"></div>
<div style="position:absolute;left:49px;top:885px;width:2676px;height:1px;background:#e2e2e2"></div>
<div style="position:absolute;left:49px;top:1020px;width:2676px;height:1px;background:#e2e2e2"></div>
<div style="position:absolute;left:49px;top:1176px;width:2676px;height:1px;background:#e2e2e2"></div>
<div style="position:absolute;left:49px;top:1289px;width:2676px;height:1px;background:#e2e2e2"></div>
<div style="position:absolute;left:184px;top:305px;width:1px;height:1049px;background:#e2e2e2"></div>
<div style="position:absolute;left:287px;top:305px;width:1px;height:1049px;background:#e2e2e2"></div>
<div style="position:absolute;left:626px;top:305px;width:1px;height:1049px;background:#e2e2e2"></div>
<div style="position:absolute;left:1081px;top:305px;width:1px;height:1049px;background:#e2e2e2"></div>
<div style="position:absolute;left:1318px;top:305px;width:1px;height:1049px;background:#e2e2e2"></div>
<div style="position:absolute;left:1534px;top:305px;width:1px;height:1049px;background:#e2e2e2"></div>
<div style="position:absolute;left:1886px;top:305px;width:1px;height:1049px;background:#e2e2e2"></div>
<div style="position:absolute;left:2643px;top:305px;width:1px;height:1049px;background:#e2e2e2"></div>
<div style="position:absolute;left:224.6px;top:360.8px;width:21px;height:21px;border:2.4px solid #707070;border-radius:3px"></div>
<div style="position:absolute;left:631px;top:362.0px;height:21px;border-radius:11px;background:#e8eaed;padding:0 8px 0 29px;font-size:17.77px;line-height:21px;color:#000;white-space:pre">The running kind of smile (The Running Kind).jpg</div>
<svg style="position:absolute;left:638px;top:365.5px" width="14" height="14" viewBox="0 0 24 24"><path d="M6 2c-1.1 0-2 .9-2 2v16c0 1.1.9 2 2 2h12c1.1 0 2-.9 2-2V8l-6-6H6z" fill="#000"/><path d="M14 2v6h6" fill="#e8eaed"/></svg>
<div style="position:absolute;left:1086px;top:361.83px;height:21.33px;font-size:17.77px;line-height:21.33px;color:#000;white-space:pre;">The Running Kind</div>
<div style="position:absolute;left:1323px;top:361.83px;height:21.33px;font-size:17.77px;line-height:21.33px;color:#000;white-space:pre;">TBD</div>
<div style="position:absolute;left:1539px;top:361.83px;height:21.33px;font-size:17.77px;line-height:21.33px;color:#000;white-space:pre;">The running kind of smile.</div>
<div style="position:absolute;left:1891px;top:309.51px;height:21.33px;font-size:17.77px;line-height:21.33px;color:#000;white-space:pre;">If you&#x27;re looking for some easy ways to brighten up the timeline, grab one of the RD Collective</div>
<div style="position:absolute;left:1891px;top:330.84px;height:21.33px;font-size:17.77px;line-height:21.33px;color:#000;white-space:pre;">photos, which was curated for a series, &quot;What does public lands mean to you?&quot;, and splash it</div>
<div style="position:absolute;left:1891px;top:352.17px;height:21.33px;font-size:17.77px;line-height:21.33px;color:#000;white-space:pre;">on the feed. You can use something like this — &quot;The running kind of smile&quot; — which is a play</div>
<div style="position:absolute;left:1891px;top:373.50px;height:21.33px;font-size:17.77px;line-height:21.33px;color:#000;white-space:pre;">on the org that supplied it, but also how running brings smiles out of us. Each mile, a smile.</div>
<div style="position:absolute;left:1891px;top:394.83px;height:21.33px;font-size:17.77px;line-height:21.33px;color:#000;white-space:pre;">You could post this on a Monday or Friday and ask, &quot;Where is/did running taking/take you this</div>
<div style="position:absolute;left:1891px;top:416.16px;height:21.33px;font-size:17.77px;line-height:21.33px;color:#000;white-space:pre;">weekend?&quot; Or, something about running far brings us closer together.</div>
<div style="position:absolute;left:224.6px;top:484.8px;width:21px;height:21px;border:2.4px solid #707070;border-radius:3px"></div>
<div style="position:absolute;left:631px;top:486.0px;height:21px;border-radius:11px;background:#e8eaed;padding:0 8px 0 29px;font-size:17.77px;line-height:21px;color:#000;white-space:pre">We&#x27;re in this for the long run.JPG</div>
<svg style="position:absolute;left:638px;top:489.5px" width="14" height="14" viewBox="0 0 24 24"><path d="M6 2c-1.1 0-2 .9-2 2v16c0 1.1.9 2 2 2h12c1.1 0 2-.9 2-2V8l-6-6H6z" fill="#000"/><path d="M14 2v6h6" fill="#e8eaed"/></svg>
<div style="position:absolute;left:1086px;top:485.83px;height:21.33px;font-size:17.77px;line-height:21.33px;color:#000;white-space:pre;">The Running Kind</div>
<div style="position:absolute;left:1323px;top:485.83px;height:21.33px;font-size:17.77px;line-height:21.33px;color:#000;white-space:pre;">TBD</div>
<div style="position:absolute;left:1539px;top:485.83px;height:21.33px;font-size:17.77px;line-height:21.33px;color:#000;white-space:pre;">We&#x27;re in this for the long run.</div>
<div style="position:absolute;left:1891px;top:444.18px;height:21.33px;font-size:17.77px;line-height:21.33px;color:#000;white-space:pre;">The idea here being: in the same way that every mile adds up, so does every action. This work</div>
<div style="position:absolute;left:1891px;top:465.50px;height:21.33px;font-size:17.77px;line-height:21.33px;color:#000;white-space:pre;">is equal parts prep and planning, action and rest. How are you staying engaged, but also, how</div>
<div style="position:absolute;left:1891px;top:486.84px;height:21.33px;font-size:17.77px;line-height:21.33px;color:#000;white-space:pre;">are you taking care of yourself so that you can continue to keep working and stay engaged?</div>
<div style="position:absolute;left:1891px;top:508.17px;height:21.33px;font-size:17.77px;line-height:21.33px;color:#000;white-space:pre;">There&#x27;s no easy answer, as there&#x27;s no easy fix, but you could share a few things that helps</div>
<div style="position:absolute;left:1891px;top:529.50px;height:21.33px;font-size:17.77px;line-height:21.33px;color:#000;white-space:pre;">RPL stay grounded.</div>
<div style="position:absolute;left:224.6px;top:619.3px;width:21px;height:21px;border:2.4px solid #707070;border-radius:3px"></div>
<div style="position:absolute;left:631px;top:620.5px;height:21px;border-radius:11px;background:#e8eaed;padding:0 8px 0 29px;font-size:17.77px;line-height:21px;color:#000;white-space:pre">Running makes you kind</div>
<svg style="position:absolute;left:638px;top:624.0px" width="14" height="14" viewBox="0 0 24 24"><path d="M6 2c-1.1 0-2 .9-2 2v16c0 1.1.9 2 2 2h12c1.1 0 2-.9 2-2V8l-6-6H6z" fill="#000"/><path d="M14 2v6h6" fill="#e8eaed"/></svg>
<div style="position:absolute;left:1086px;top:620.34px;height:21.33px;font-size:17.77px;line-height:21.33px;color:#000;white-space:pre;">The Running Kind</div>
<div style="position:absolute;left:1323px;top:620.34px;height:21.33px;font-size:17.77px;line-height:21.33px;color:#000;white-space:pre;">TBD</div>
<div style="position:absolute;left:1539px;top:620.34px;height:21.33px;font-size:17.77px;line-height:21.33px;color:#000;white-space:pre;">Running makes you kind.</div>
<div style="position:absolute;left:1891px;top:557.35px;height:21.33px;font-size:17.77px;line-height:21.33px;color:#000;white-space:pre;">This goes without saying, but you don&#x27;t want to share &quot;The Running Kind&quot; photos back to back,</div>
<div style="position:absolute;left:1891px;top:578.68px;height:21.33px;font-size:17.77px;line-height:21.33px;color:#000;white-space:pre;">but when you drop them in once in a while — every other month, for example – you can</div>
<div style="position:absolute;left:1891px;top:600.00px;height:21.33px;font-size:17.77px;line-height:21.33px;color:#000;white-space:pre;">continue to come at it from different angles. For ex., here, you could say, &quot;Running makes you</div>
<div style="position:absolute;left:1891px;top:621.34px;height:21.33px;font-size:17.77px;line-height:21.33px;color:#000;white-space:pre;">kind,&quot; and then say while that&#x27;s not scientifically true, running does bring you closer to your</div>
<div style="position:absolute;left:1891px;top:642.66px;height:21.33px;font-size:17.77px;line-height:21.33px;color:#000;white-space:pre;">core, and when you&#x27;re closer to your core, you&#x27;re closer to your community and the land you</div>
<div style="position:absolute;left:1891px;top:664.00px;height:21.33px;font-size:17.77px;line-height:21.33px;color:#000;white-space:pre;">live with. So there could be ways of associating the imagery with sentiments that RPL</div>
<div style="position:absolute;left:1891px;top:685.33px;height:21.33px;font-size:17.77px;line-height:21.33px;color:#000;white-space:pre;">represents, while nodding to our partners who supplied the images.</div>
<div style="position:absolute;left:224.6px;top:785.8px;width:21px;height:21px;border:2.4px solid #707070;border-radius:3px"></div>
<div style="position:absolute;left:631px;top:787.0px;height:21px;border-radius:11px;background:#e8eaed;padding:0 8px 0 29px;font-size:17.77px;line-height:21px;color:#000;white-space:pre">Shared trails lead to shared dreams</div>
<svg style="position:absolute;left:638px;top:790.5px" width="14" height="14" viewBox="0 0 24 24"><path d="M6 2c-1.1 0-2 .9-2 2v16c0 1.1.9 2 2 2h12c1.1 0 2-.9 2-2V8l-6-6H6z" fill="#000"/><path d="M14 2v6h6" fill="#e8eaed"/></svg>
<div style="position:absolute;left:1086px;top:786.84px;height:21.33px;font-size:17.77px;line-height:21.33px;color:#000;white-space:pre;">The Running Kind</div>
<div style="position:absolute;left:1323px;top:786.84px;height:21.33px;font-size:17.77px;line-height:21.33px;color:#000;white-space:pre;">TBD</div>
<div style="position:absolute;left:1539px;top:786.84px;height:21.33px;font-size:17.77px;line-height:21.33px;color:#000;white-space:pre;">Shared trails lead to shared dreams.</div>
<div style="position:absolute;left:1891px;top:713.18px;height:21.33px;font-size:17.77px;line-height:21.33px;color:#000;white-space:pre;">This pic from Running Kind features one of their non-binary runners, and insofar as it feels</div>
<div style="position:absolute;left:1891px;top:734.51px;height:21.33px;font-size:17.77px;line-height:21.33px;color:#000;white-space:pre;">appropriate, you could gesture toward representation and inclusion without tokenizing the</div>
<div style="position:absolute;left:1891px;top:755.84px;height:21.33px;font-size:17.77px;line-height:21.33px;color:#000;white-space:pre;">person in the photo with a sentiment around shared trails and shared dreams. That all of our</div>
<div style="position:absolute;left:1891px;top:777.17px;height:21.33px;font-size:17.77px;line-height:21.33px;color:#000;white-space:pre;">dreams are valid, that we all exist out here, and that we should share trails, and create shared</div>
<div style="position:absolute;left:1891px;top:798.50px;height:21.33px;font-size:17.77px;line-height:21.33px;color:#000;white-space:pre;">trails for each other. The body of the caption could be something like, which race or run</div>
<div style="position:absolute;left:1891px;top:819.83px;height:21.33px;font-size:17.77px;line-height:21.33px;color:#000;white-space:pre;">changed your run? So it could also be an invitation for how running has made a difference in</div>
<div style="position:absolute;left:1891px;top:841.16px;height:21.33px;font-size:17.77px;line-height:21.33px;color:#000;white-space:pre;">peoples&#x27; lives, and that that&#x27;s what RPL is trying to do: create more trails and paths for the</div>
<div style="position:absolute;left:1891px;top:862.49px;height:21.33px;font-size:17.77px;line-height:21.33px;color:#000;white-space:pre;">public.</div>
<div style="position:absolute;left:224.6px;top:941.8px;width:21px;height:21px;border:2.4px solid #707070;border-radius:3px"></div>
<div style="position:absolute;left:631px;top:943.0px;height:21px;border-radius:11px;background:#e8eaed;padding:0 8px 0 29px;font-size:17.77px;line-height:21px;color:#000;white-space:pre">Running gives you perspective.jpg</div>
<svg style="position:absolute;left:638px;top:946.5px" width="14" height="14" viewBox="0 0 24 24"><path d="M6 2c-1.1 0-2 .9-2 2v16c0 1.1.9 2 2 2h12c1.1 0 2-.9 2-2V8l-6-6H6z" fill="#000"/><path d="M14 2v6h6" fill="#e8eaed"/></svg>
<div style="position:absolute;left:1086px;top:942.84px;height:21.33px;font-size:17.77px;line-height:21.33px;color:#000;white-space:pre;">Miwok 100K</div>
<div style="position:absolute;left:1323px;top:942.84px;height:21.33px;font-size:17.77px;line-height:21.33px;color:#000;white-space:pre;">Tony with a Sony</div>
<div style="position:absolute;left:1539px;top:942.84px;height:21.33px;font-size:17.77px;line-height:21.33px;color:#000;white-space:pre;">Running gives you perspective.</div>
<div style="position:absolute;left:1891px;top:890.51px;height:21.33px;font-size:17.77px;line-height:21.33px;color:#000;white-space:pre;">We know that when folks come to trail running, it gives them new perspective on things: life,</div>
<div style="position:absolute;left:1891px;top:911.84px;height:21.33px;font-size:17.77px;line-height:21.33px;color:#000;white-space:pre;">relationships, boundaries, possibility, health, the land, etc. Remember that you&#x27;re trying to help</div>
<div style="position:absolute;left:1891px;top:933.17px;height:21.33px;font-size:17.77px;line-height:21.33px;color:#000;white-space:pre;">a lot of people cross boundaries for themselves. Maybe there&#x27;s someone in the city who&#x27;s been</div>
<div style="position:absolute;left:1891px;top:954.50px;height:21.33px;font-size:17.77px;line-height:21.33px;color:#000;white-space:pre;">wanting to get out on the trails for the first time and see road running from a different angle.</div>
<div style="position:absolute;left:1891px;top:975.83px;height:21.33px;font-size:17.77px;line-height:21.33px;color:#000;white-space:pre;">Pictures like this, which show you the city at a distance, help convey that kind of mood and</div>
<div style="position:absolute;left:1891px;top:997.16px;height:21.33px;font-size:17.77px;line-height:21.33px;color:#000;white-space:pre;">sentiment.</div>
<div style="position:absolute;left:224.6px;top:1087.3px;width:21px;height:21px;border:2.4px solid #707070;border-radius:3px"></div>
<div style="position:absolute;left:631px;top:1088.5px;height:21px;border-radius:11px;background:#e8eaed;padding:0 8px 0 29px;font-size:17.77px;line-height:21px;color:#000;white-space:pre">At every ledge, there is knowledge.jpg</div>
<svg style="position:absolute;left:638px;top:1092.0px" width="14" height="14" viewBox="0 0 24 24"><path d="M6 2c-1.1 0-2 .9-2 2v16c0 1.1.9 2 2 2h12c1.1 0 2-.9 2-2V8l-6-6H6z" fill="#000"/><path d="M14 2v6h6" fill="#e8eaed"/></svg>
<div style="position:absolute;left:1086px;top:1088.34px;height:21.33px;font-size:17.77px;line-height:21.33px;color:#000;white-space:pre;">Miwok 100K</div>
<div style="position:absolute;left:1323px;top:1088.34px;height:21.33px;font-size:17.77px;line-height:21.33px;color:#000;white-space:pre;">Banta Visual</div>
<div style="position:absolute;left:1539px;top:1077.67px;height:21.33px;font-size:17.77px;line-height:21.33px;color:#000;white-space:pre;">At every ledge, there is knowledge.</div>
<div style="position:absolute;left:1539px;top:1099.00px;height:21.33px;font-size:17.77px;line-height:21.33px;color:#000;white-space:pre;">#sorrynotsorry</div>
<div style="position:absolute;left:1891px;top:1025.35px;height:21.33px;font-size:17.77px;line-height:21.33px;color:#000;white-space:pre;">Since &quot;words&quot; are a part of RPL&#x27;s domain — you are advocating for public lands and helping</div>
<div style="position:absolute;left:1891px;top:1046.67px;height:21.33px;font-size:17.77px;line-height:21.33px;color:#000;white-space:pre;">people put into their passion into practice and action — you can have some fun with wordplay,</div>
<div style="position:absolute;left:1891px;top:1068.01px;height:21.33px;font-size:17.77px;line-height:21.33px;color:#000;white-space:pre;">too. A pun can be like a prank, so it better be good and not happen too often, but a sprinkle of</div>
<div style="position:absolute;left:1891px;top:1089.34px;height:21.33px;font-size:17.77px;line-height:21.33px;color:#000;white-space:pre;">fun like this can show a little wink of personality from an org. You don&#x27;t want to show the same</div>
<div style="position:absolute;left:1891px;top:1110.66px;height:21.33px;font-size:17.77px;line-height:21.33px;color:#000;white-space:pre;">pictures and same the same thing always. A lot of this kit and these posts try to make new</div>
<div style="position:absolute;left:1891px;top:1132.00px;height:21.33px;font-size:17.77px;line-height:21.33px;color:#000;white-space:pre;">associations, reveal intersections, and create new contexts for conversation. The idea here</div>
<div style="position:absolute;left:1891px;top:1153.33px;height:21.33px;font-size:17.77px;line-height:21.33px;color:#000;white-space:pre;">being that knowlegde is in the land, visible and not.</div>
<div style="position:absolute;left:224.6px;top:1221.8px;width:21px;height:21px;border:2.4px solid #707070;border-radius:3px"></div>
<div style="position:absolute;left:631px;top:1223.0px;height:21px;border-radius:11px;background:#e8eaed;padding:0 8px 0 29px;font-size:17.77px;line-height:21px;color:#000;white-space:pre">There&#x27;s no limit to running.jpg</div>
<svg style="position:absolute;left:638px;top:1226.5px" width="14" height="14" viewBox="0 0 24 24"><path d="M6 2c-1.1 0-2 .9-2 2v16c0 1.1.9 2 2 2h12c1.1 0 2-.9 2-2V8l-6-6H6z" fill="#000"/><path d="M14 2v6h6" fill="#e8eaed"/></svg>
<div style="position:absolute;left:1086px;top:1222.84px;height:21.33px;font-size:17.77px;line-height:21.33px;color:#000;white-space:pre;">Miwok 100K</div>
<div style="position:absolute;left:1323px;top:1222.84px;height:21.33px;font-size:17.77px;line-height:21.33px;color:#000;white-space:pre;">Banta Visual</div>
<div style="position:absolute;left:1539px;top:1222.84px;height:21.33px;font-size:17.77px;line-height:21.33px;color:#000;white-space:pre;">There&#x27;s no limit to running.</div>
<div style="position:absolute;left:1891px;top:1181.17px;height:21.33px;font-size:17.77px;line-height:21.33px;color:#000;white-space:pre;">The idea here is that there&#x27;s no limit to what we can do in and with community. What we can do</div>
<div style="position:absolute;left:1891px;top:1202.50px;height:21.33px;font-size:17.77px;line-height:21.33px;color:#000;white-space:pre;">when we support each other. That we motivation each other by what we can do. The essence</div>
<div style="position:absolute;left:1891px;top:1223.84px;height:21.33px;font-size:17.77px;line-height:21.33px;color:#000;white-space:pre;">here is that motivation is a communal act, that when we do something to challenge our own</div>
<div style="position:absolute;left:1891px;top:1245.16px;height:21.33px;font-size:17.77px;line-height:21.33px;color:#000;white-space:pre;">limits, we show others what is possible. And so while this picture hints at &quot;age&quot; as a limit, you</div>
<div style="position:absolute;left:1891px;top:1266.49px;height:21.33px;font-size:17.77px;line-height:21.33px;color:#000;white-space:pre;">can show the bigger picture here about how we empower each other to keep going.</div>
<div style="position:absolute;left:1891px;top:1293.20px;height:21.33px;font-size:17.77px;line-height:21.33px;color:#000;white-space:pre;">Given that you&#x27;re trying to reach a broad range of folks — trail and road runners, with little to</div>
<div style="position:absolute;left:1891px;top:1314.53px;height:21.33px;font-size:17.77px;line-height:21.33px;color:#000;white-space:pre;">lots of experience — it would be a good idea to show what running for public lands can look</div>
<div style="position:absolute;left:1891px;top:1335.86px;height:21.33px;font-size:17.77px;line-height:21.33px;color:#000;white-space:pre;">like. Most people who volunteer at a race are changed by it. And so a goal is to get people out</div>
<div style="position:absolute;left:1891px;top:1357.19px;height:21.33px;font-size:17.77px;line-height:21.33px;color:#000;white-space:pre;">there</div>
<div style="position:absolute;left:300px;top:942.5px;width:314.5px;height:21px;border-radius:11px;background:#553285;padding-left:8px;font-size:17.77px;line-height:21px;color:#e8d8f6;white-space:pre">Running takes you places</div>
<svg style="position:absolute;left:595px;top:950.0px" width="11" height="6" viewBox="0 0 11 6"><path d="M0 0H11L5.5 5.5z" fill="#e8d8f6"/></svg>
<div style="position:absolute;left:300px;top:1088.0px;width:314.5px;height:21px;border-radius:11px;background:#553285;padding-left:8px;font-size:17.77px;line-height:21px;color:#e8d8f6;white-space:pre">Running takes you places</div>
<svg style="position:absolute;left:595px;top:1095.5px" width="11" height="6" viewBox="0 0 11 6"><path d="M0 0H11L5.5 5.5z" fill="#e8d8f6"/></svg>
<div style="position:absolute;left:300px;top:1222.5px;width:314.5px;height:21px;border-radius:11px;background:#fce5a6;padding-left:8px;font-size:17.77px;line-height:21px;color:#473822;white-space:pre">Each step, a world of difference</div>
<svg style="position:absolute;left:595px;top:1230.0px" width="11" height="6" viewBox="0 0 11 6"><path d="M0 0H11L5.5 5.5z" fill="#473822"/></svg>
<div style="position:absolute;left:286.2px;top:303.8px;width:338.7px;height:135px;border:2.4px solid #0b50d0;outline:1.4px solid #aac6f8"></div>
<div style="position:absolute;left:291px;top:307px;font-size:17.3px;line-height:21px;color:#000;white-space:pre">Running takes you places</div>
<div style="position:absolute;left:622.4px;top:435.5px;width:9.6px;height:9.6px;background:#1f55d0;border-radius:50%"></div>
<div style="position:absolute;left:287.5px;top:439.3px;width:338.3px;height:430.7px;background:#fff;border-radius:8px 8px 9px 9px;box-shadow:0 2px 5px rgba(0,0,0,0.28),0 1px 2px rgba(0,0,0,0.18);overflow:hidden">
<div style="position:absolute;left:0;top:0;width:100%;height:42.7px;background:#f1f1f1"></div>
<div style="position:absolute;left:13.5px;top:8.8px;height:29px;border-radius:9px;background:#54ae38;color:#eef8e6;padding:0 7.5px;font-size:15.9px;line-height:29px;white-space:pre;-webkit-text-stroke:0.35px #eef8e6">Run with ___ in mind</div>
<div style="position:absolute;left:13.5px;top:51.4px;height:29px;border-radius:9px;background:#3e3e3e;color:#ececec;padding:0 7.5px;font-size:15.9px;line-height:29px;white-space:pre;-webkit-text-stroke:0.35px #ececec">Going to extra mile</div>
<div style="position:absolute;left:13.5px;top:94.0px;height:29px;border-radius:9px;background:#6b3a13;color:#ffdcc0;padding:0 7.5px;font-size:15.9px;line-height:29px;white-space:pre;-webkit-text-stroke:0.35px #ffdcc0">Putting passion to work</div>
<div style="position:absolute;left:13.5px;top:136.6px;height:29px;border-radius:9px;background:#553285;color:#eadaf8;padding:0 7.5px;font-size:15.9px;line-height:29px;white-space:pre;-webkit-text-stroke:0.35px #eadaf8">Running takes you places</div>
<div style="position:absolute;left:13.5px;top:179.2px;height:29px;border-radius:9px;background:#316d45;color:#d7f3c8;padding:0 7.5px;font-size:15.9px;line-height:29px;white-space:pre;-webkit-text-stroke:0.35px #d7f3c8">Working together</div>
<div style="position:absolute;left:13.5px;top:221.8px;height:29px;border-radius:9px;background:#2453a6;color:#dde8ff;padding:0 7.5px;font-size:15.9px;line-height:29px;white-space:pre;-webkit-text-stroke:0.35px #dde8ff">Starting lines of change</div>
<div style="position:absolute;left:13.5px;top:264.4px;height:29px;border-radius:9px;background:#2f5566;color:#e0eef2;padding:0 7.5px;font-size:15.9px;line-height:29px;white-space:pre;-webkit-text-stroke:0.35px #e0eef2">Tending to paths and pasts</div>
<div style="position:absolute;left:13.5px;top:307.0px;height:29px;border-radius:9px;background:#a21f17;color:#fde0dc;padding:0 7.5px;font-size:15.9px;line-height:29px;white-space:pre;-webkit-text-stroke:0.35px #fde0dc">Team future</div>
<div style="position:absolute;left:13.5px;top:349.6px;height:29px;border-radius:9px;background:#fce5a6;color:#473822;padding:0 7.5px;font-size:15.9px;line-height:29px;white-space:pre;-webkit-text-stroke:0.35px #473822">Each step, a world of difference</div>
<div style="position:absolute;left:0;top:386px;width:100%;height:1px;background:#dadce0"></div>
<svg style="position:absolute;left:300px;top:399px" width="22" height="22" viewBox="0 0 24 24"><path fill="#444746" d="M3 17.25V21h3.75L17.81 9.94l-3.75-3.75L3 17.25zM5.92 19H5v-.92l9.06-9.06.92.92L5.92 19zM20.71 5.63l-2.34-2.34c-.2-.2-.45-.29-.71-.29s-.51.1-.7.29l-1.83 1.83 3.75 3.75 1.83-1.83c.39-.39.39-1.02 0-1.41z"/></svg>
</div>
<div style="position:absolute;left:0px;top:1354px;width:2676px;height:10px;background:#f8f9fa"></div>
<div style="position:absolute;left:48px;top:1354px;width:1px;height:10px;background:#c4c7c5"></div>
<div style="position:absolute;left:0px;top:1354px;width:2676px;height:1px;background:#c4c7c5"></div>
<div style="position:absolute;left:51.5px;top:1356.5px;width:1214.5px;height:12px;background:#dadada;border-radius:6px"></div>
</body></html>
